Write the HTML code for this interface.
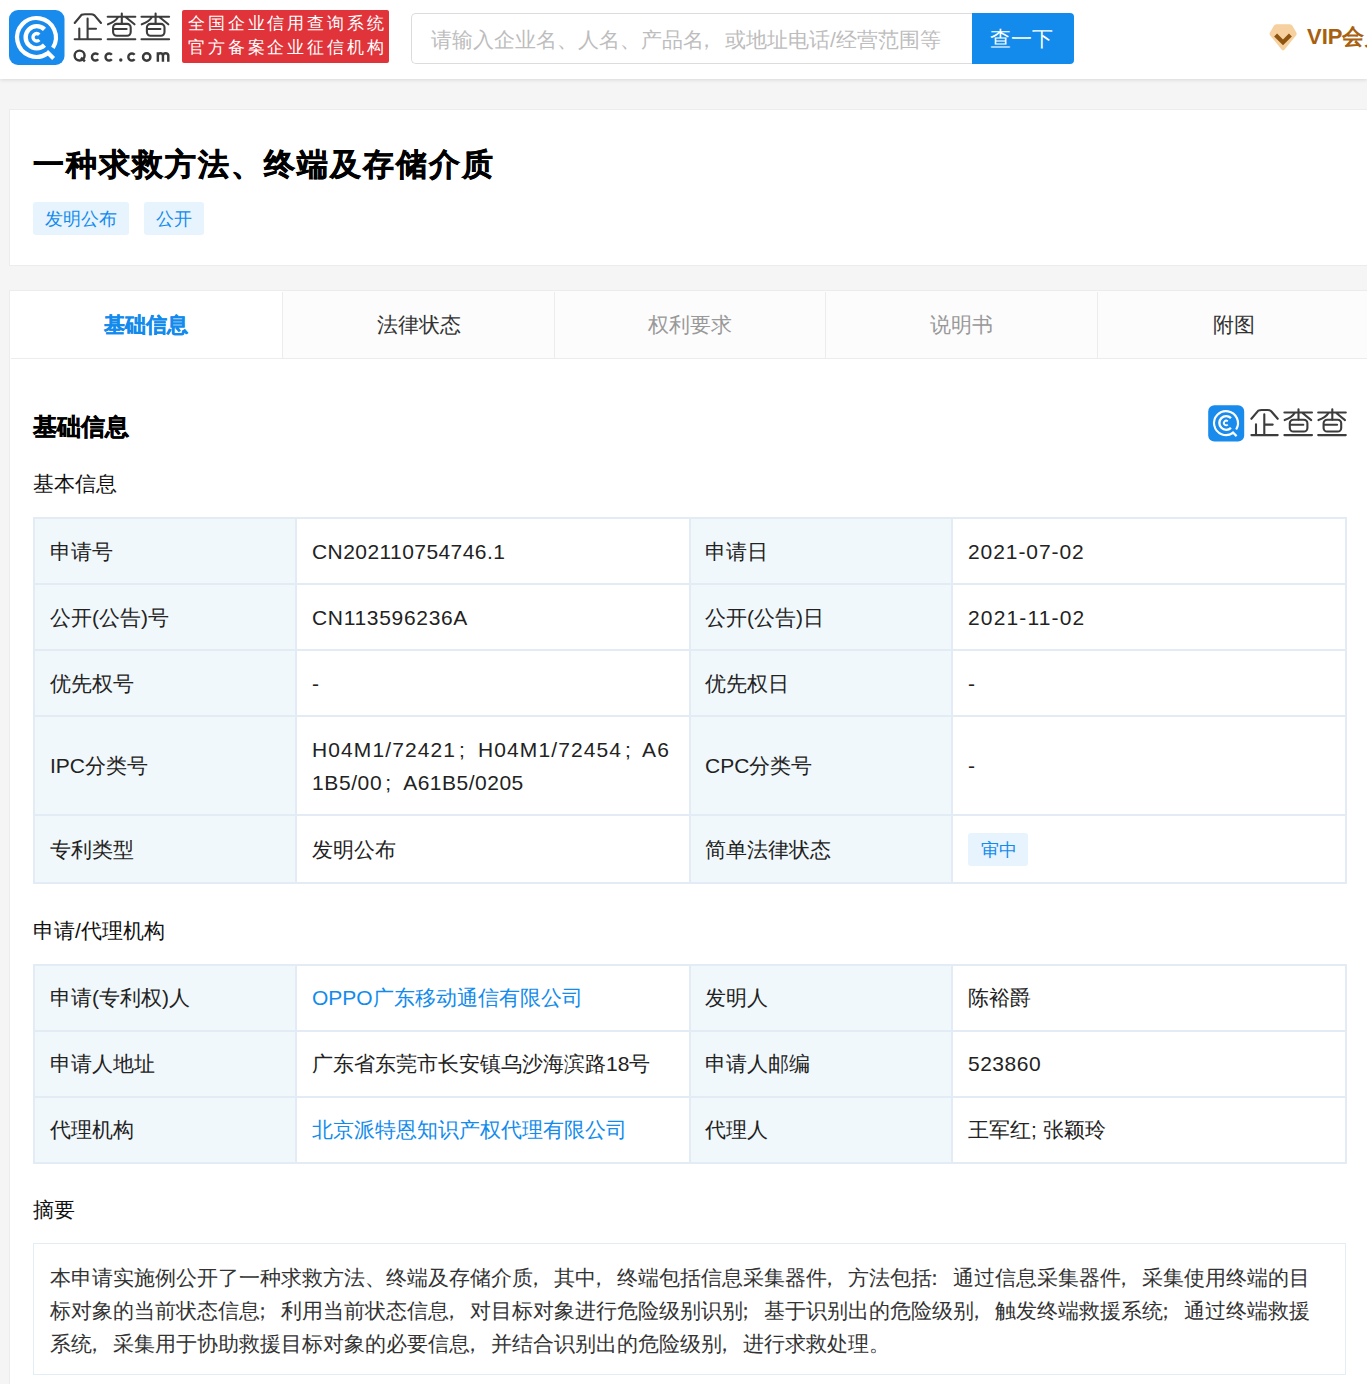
<!DOCTYPE html>
<html><head><meta charset="utf-8">
<style>
*{box-sizing:border-box;margin:0;padding:0}
html,body{width:1367px;height:1384px;overflow:hidden;background:#f5f5f5;font-family:"Liberation Sans",sans-serif;color:#333}
.a{position:absolute;white-space:nowrap}
.hdr{position:absolute;left:0;top:0;width:1367px;height:79px;background:#fff;box-shadow:0 1px 4px rgba(0,0,0,.12)}
.badge{position:absolute;left:182px;top:10px;width:207px;height:53px;background:#e0333a;border-radius:2px}
.badge div{position:absolute;left:6px;color:#fff;font-size:17px;line-height:24px;letter-spacing:2.85px;white-space:nowrap}
.search{position:absolute;left:411px;top:13px;width:563px;height:51px;border:1px solid #dcdcdc;border-right:0;border-radius:5px 0 0 5px;background:#fff}
.ph{position:absolute;left:431px;top:19.5px;color:#bdbdbd;font-size:21px;line-height:40px;white-space:nowrap}
.sbtn{position:absolute;left:972px;top:13px;width:102px;height:51px;background:#128bed;border-radius:0 4px 4px 0}
.sbtn div{position:absolute;left:-1.5px;top:0;width:102px;text-align:center;color:#fff;font-size:21px;line-height:51px}
.vip{position:absolute;left:1307px;top:20px;font-size:22px;line-height:34px;font-weight:bold;color:#a8600f;white-space:nowrap}
.card{position:absolute;left:9px;width:1420px;background:#fff;border:1px solid #ececec}
.title{position:absolute;left:33px;top:145px;font-size:31px;line-height:40px;letter-spacing:2px;font-weight:bold;color:#000;-webkit-text-stroke:0.5px #000;white-space:nowrap}
.tag{position:absolute;height:33px;background:#e7f3fd;color:#128bed;font-size:18px;line-height:33px;padding:1px 0 0 12px;border-radius:3px;white-space:nowrap}
.tabbar{position:absolute;left:10px;top:291px;width:1400px;height:67px;background:#fcfcfc}
.tabline{position:absolute;left:10px;top:358px;width:1400px;height:1px;background:#ececec}
.tdiv{position:absolute;top:292px;width:1px;height:66px;background:#ececec}
.tab{position:absolute;top:305px;font-size:21px;line-height:40px;color:#333;text-align:center;white-space:nowrap}
.h2{position:absolute;left:33px;top:406.5px;font-size:24px;line-height:40px;font-weight:bold;color:#000;-webkit-text-stroke:0.4px #000;white-space:nowrap}
.h3{position:absolute;left:33px;font-size:21px;line-height:40px;color:#111;white-space:nowrap}
.hl{position:absolute;background:#e3ecf5}
.lb{position:absolute;background:#f1f8fb}
.c{position:absolute;font-size:21px;line-height:40px;color:#222;white-space:nowrap}
.lnk{color:#128bed}
.p{position:relative;left:-8px}
.ls{letter-spacing:1.1px}
.sc{display:inline-block;width:22px;padding-left:3px}
.abs{position:absolute;left:33px;top:1243px;width:1313px;height:132px;border:1px solid #e3edf6;background:#fff}
.abt{position:absolute;left:50px;top:1258px;font-size:21px;line-height:33px;color:#333;white-space:nowrap}
</style></head><body>
<div class="hdr"></div>
<svg class="a" style="left:0;top:0" width="180" height="79" viewBox="0 0 180 79">
  <rect x="9" y="10" width="55.5" height="55" rx="9" fill="#188bec"/>
  <g fill="none" stroke="#fff" stroke-width="4.2">
    <path d="M 47.4 53.5 A 19.4 19.4 0 1 1 52.9 47.8"/>
    <path d="M 44.5 29.3 A 11.1 11.1 0 1 0 44.5 45.2" stroke-width="4.4"/>
    <path d="M 39.3 34.6 A 3.7 3.7 0 1 0 39.3 39.9" stroke-width="3.4"/>
  </g>
  <path d="M 46.6 51.6 L 53.6 58.6" stroke="#fff" stroke-width="4.2"/>
  <g fill="none" stroke="#3c3c3c" stroke-width="2.1" stroke-linecap="round" stroke-linejoin="round">
    <path d="M 74.7 23 L 81.6 14.8 Q 83 14.2 85 14.2 L 91 14.2 Q 93 14.2 94.5 15.4 L 101 23"/>
    <path d="M 87.6 18.5 V 39.3 M 87.6 28.8 H 96 M 79.3 28.5 V 39.3 M 74.7 39.3 H 101"/>
    <g id="cha">
      <path d="M 107.7 16.7 H 135.3 M 121.8 13.5 V 23.8 M 118.2 17 Q 115 22 108 24.3 M 125.8 17.2 L 134.5 24.3"/>
      <rect x="113.1" y="23.9" width="17.6" height="11.8" rx="3.6"/>
      <path d="M 114 29 H 126.6 M 107.7 39.3 H 135.3"/>
    </g>
    <use href="#cha" x="33.8"/>
  </g>
  <g fill="none" stroke="#3a3a3a" stroke-width="2.45">
    <circle cx="79.6" cy="55.6" r="4.95"/>
    <path d="M 81 57.6 L 84.9 61.3" stroke-width="2.5"/>
    <path id="qc" d="M 98.22 54.72 A 3.55 3.55 0 1 0 98.22 59.28"/>
    <use href="#qc" x="13.6"/>
    <use href="#qc" x="36.4"/>
    <circle cx="146.7" cy="57" r="3.7"/>
    <path d="M 157.85 61.8 V 52.2 M 157.85 55.6 Q 158 53.2 160.4 53.2 Q 162.9 53.2 162.95 55.6 V 61.8 M 162.95 55.6 Q 163.1 53.2 165.6 53.2 Q 168.2 53.2 168.3 55.6 V 61.8"/>
  </g>
  <circle cx="120.8" cy="60" r="1.7" fill="#3a3a3a"/>
</svg>
<div class="badge"><div style="top:2px">全国企业信用查询系统</div><div style="top:26px">官方备案企业征信机构</div></div>
<div class="search"></div>
<div class="ph">请输入企业名、人名、产品名<span class="p">，</span>或地址电话/经营范围等</div>
<div class="sbtn"><div>查一下</div></div>
<svg class="a" style="left:1266px;top:22px" width="34" height="32" viewBox="1266 22 34 32">
  <path d="M 1276.5 24.3 L 1289.8 24.3 Q 1291.5 24.3 1292.4 25.8 L 1296.3 32.6 Q 1297.1 34.2 1296 35.6 L 1284.4 49.8 Q 1283.1 51.2 1281.8 49.8 L 1270.2 35.6 Q 1269.1 34.2 1269.9 32.6 L 1273.8 25.8 Q 1274.7 24.3 1276.5 24.3 Z" fill="#f6d09f"/>
  <path d="M 1275.6 35 L 1283 42.4 L 1290.4 35" fill="none" stroke="#8e5511" stroke-width="4.2" stroke-linejoin="miter"/>
</svg>
<div class="vip">VIP会员</div>

<div class="card" style="top:109px;height:157px"></div>
<div class="title">一种求救方法、终端及存储介质</div>
<div class="tag" style="left:33px;top:202px;width:96px">发明公布</div>
<div class="tag" style="left:144px;top:202px;width:60px">公开</div>

<div class="card" style="top:290px;height:1200px"></div>
<div class="tabbar"></div>
<div style="position:absolute;left:10px;top:291px;width:272px;height:67px;background:#fff"></div>
<div class="tabline" style="left:11px;width:1400px"></div>
<div class="tdiv" style="left:282px"></div>
<div class="tdiv" style="left:554px"></div>
<div class="tdiv" style="left:825px"></div>
<div class="tdiv" style="left:1097px"></div>
<div class="tab" style="left:10px;width:272px;color:#128bed;font-weight:bold;-webkit-text-stroke:0.3px #128bed">基础信息</div>
<div class="tab" style="left:283px;width:271px">法律状态</div>
<div class="tab" style="left:555px;width:270px;color:#999">权利要求</div>
<div class="tab" style="left:826px;width:271px;color:#999">说明书</div>
<div class="tab" style="left:1098px;width:271px">附图</div>

<div class="h2">基础信息</div>
<div class="h3" style="top:464px">基本信息</div>

<svg class="a" style="left:1200px;top:398px" width="167" height="50" viewBox="1200 398 167 50">
  <g transform="translate(1208.2 405.3) scale(0.6486) translate(-9 -10)">
    <rect x="9" y="10" width="55.5" height="56" rx="9.5" fill="#188bec"/>
    <g transform="translate(36.6 37.4) scale(0.95) translate(-36.6 -37.4)">
    <g fill="none" stroke="#fff" stroke-width="3.5">
      <path d="M 47.4 53.5 A 19.4 19.4 0 1 1 52.9 47.8"/>
      <path d="M 44.5 29.3 A 11.1 11.1 0 1 0 44.5 45.2" stroke-width="3.8"/>
      <path d="M 39.3 34.6 A 3.7 3.7 0 1 0 39.3 39.9" stroke-width="3"/>
    </g>
    <path d="M 46.6 51.6 L 53.6 58.6" stroke="#fff" stroke-width="3.6"/>
    </g>
  </g>
  <g transform="translate(1176.7 395.8)" fill="none" stroke="#3c3c3c" stroke-width="2.1" stroke-linecap="round" stroke-linejoin="round">
    <path d="M 74.7 23 L 81.6 14.8 Q 83 14.2 85 14.2 L 91 14.2 Q 93 14.2 94.5 15.4 L 101 23"/>
    <path d="M 87.6 18.5 V 39.3 M 87.6 28.8 H 96 M 79.3 28.5 V 39.3 M 74.7 39.3 H 101"/>
    <use href="#cha"/>
    <use href="#cha" x="33.8"/>
  </g>
</svg>

<!-- table 1 -->
<div class="lb" style="left:35px;top:519px;width:260px;height:363px"></div>
<div class="lb" style="left:690px;top:519px;width:261px;height:363px"></div>
<div class="hl" style="left:33px;top:517px;width:1313px;height:2px"></div>
<div class="hl" style="left:33px;top:583px;width:1313px;height:2px"></div>
<div class="hl" style="left:33px;top:649px;width:1313px;height:2px"></div>
<div class="hl" style="left:33px;top:715px;width:1313px;height:2px"></div>
<div class="hl" style="left:33px;top:814px;width:1313px;height:2px"></div>
<div class="hl" style="left:33px;top:882px;width:1313px;height:2px"></div>
<div class="hl" style="left:33px;top:517px;width:2px;height:367px"></div>
<div class="hl" style="left:295px;top:517px;width:2px;height:367px"></div>
<div class="hl" style="left:689px;top:517px;width:1.5px;height:367px"></div>
<div class="hl" style="left:951px;top:517px;width:2px;height:367px"></div>
<div class="hl" style="left:1345px;top:517px;width:1.5px;height:367px"></div>

<div class="c" style="left:50px;top:532px">申请号</div>
<div class="c" style="left:312px;top:532px;letter-spacing:0.43px">CN202110754746.1</div>
<div class="c" style="left:705px;top:532px">申请日</div>
<div class="c" style="left:968px;top:532px;letter-spacing:0.93px">2021-07-02</div>

<div class="c" style="left:50px;top:598px">公开(公告)号</div>
<div class="c" style="left:312px;top:598px;letter-spacing:0.68px">CN113596236A</div>
<div class="c" style="left:705px;top:598px">公开(公告)日</div>
<div class="c" style="left:968px;top:598px;letter-spacing:1.15px">2021-11-02</div>

<div class="c" style="left:50px;top:664px">优先权号</div>
<div class="c" style="left:312px;top:664px">-</div>
<div class="c" style="left:705px;top:664px">优先权日</div>
<div class="c" style="left:968px;top:664px">-</div>

<div class="c" style="left:50px;top:746px">IPC分类号</div>
<div class="c" style="left:312px;top:733px;line-height:33px"><span class="ls">H04M1/72421</span><span class="sc">;</span><span class="ls">H04M1/72454</span><span class="sc" style="width:20px">;</span><span class="ls">A6</span><br><span style="letter-spacing:0.6px">1B5/00</span><span class="sc" style="width:21px">;</span><span style="letter-spacing:0.5px">A61B5/0205</span></div>
<div class="c" style="left:705px;top:746px">CPC分类号</div>
<div class="c" style="left:968px;top:746px">-</div>

<div class="c" style="left:50px;top:830px">专利类型</div>
<div class="c" style="left:312px;top:830px">发明公布</div>
<div class="c" style="left:705px;top:830px">简单法律状态</div>
<div class="tag" style="left:968px;top:833px;width:60px;font-size:17.5px;padding-left:12.5px">审中</div>

<div class="h3" style="top:911px">申请/代理机构</div>

<!-- table 2 -->
<div class="lb" style="left:35px;top:966px;width:260px;height:196px"></div>
<div class="lb" style="left:690px;top:966px;width:261px;height:196px"></div>
<div class="hl" style="left:33px;top:964px;width:1313px;height:2px"></div>
<div class="hl" style="left:33px;top:1030px;width:1313px;height:1.5px"></div>
<div class="hl" style="left:33px;top:1096px;width:1313px;height:2px"></div>
<div class="hl" style="left:33px;top:1162px;width:1313px;height:2px"></div>
<div class="hl" style="left:33px;top:964px;width:2px;height:200px"></div>
<div class="hl" style="left:295px;top:964px;width:2px;height:200px"></div>
<div class="hl" style="left:689px;top:964px;width:1.5px;height:200px"></div>
<div class="hl" style="left:951px;top:964px;width:2px;height:200px"></div>
<div class="hl" style="left:1345px;top:964px;width:1.5px;height:200px"></div>

<div class="c" style="left:50px;top:978px">申请(专利权)人</div>
<div class="c lnk" style="left:312px;top:978px">OPPO广东移动通信有限公司</div>
<div class="c" style="left:705px;top:978px">发明人</div>
<div class="c" style="left:968px;top:978px">陈裕爵</div>

<div class="c" style="left:50px;top:1044px">申请人地址</div>
<div class="c" style="left:312px;top:1044px">广东省东莞市长安镇乌沙海滨路18号</div>
<div class="c" style="left:705px;top:1044px">申请人邮编</div>
<div class="c" style="left:968px;top:1044px;letter-spacing:0.5px">523860</div>

<div class="c" style="left:50px;top:1110px">代理机构</div>
<div class="c lnk" style="left:312px;top:1110px">北京派特恩知识产权代理有限公司</div>
<div class="c" style="left:705px;top:1110px">代理人</div>
<div class="c" style="left:968px;top:1110px">王军红; 张颖玲</div>

<div class="h3" style="top:1190px">摘要</div>
<div class="abs"></div>
<div class="abt" style="top:1261px">本申请实施例公开了一种求救方法、终端及存储介质<span class="p">，</span>其中<span class="p">，</span>终端包括信息采集器件<span class="p">，</span>方法包括<span class="p">：</span>通过信息采集器件<span class="p">，</span>采集使用终端的目<br>标对象的当前状态信息<span class="p">；</span>利用当前状态信息<span class="p">，</span>对目标对象进行危险级别识别<span class="p">；</span>基于识别出的危险级别<span class="p">，</span>触发终端救援系统<span class="p">；</span>通过终端救援<br>系统<span class="p">，</span>采集用于协助救援目标对象的必要信息<span class="p">，</span>并结合识别出的危险级别<span class="p">，</span>进行求救处理。</div>
</body></html>
